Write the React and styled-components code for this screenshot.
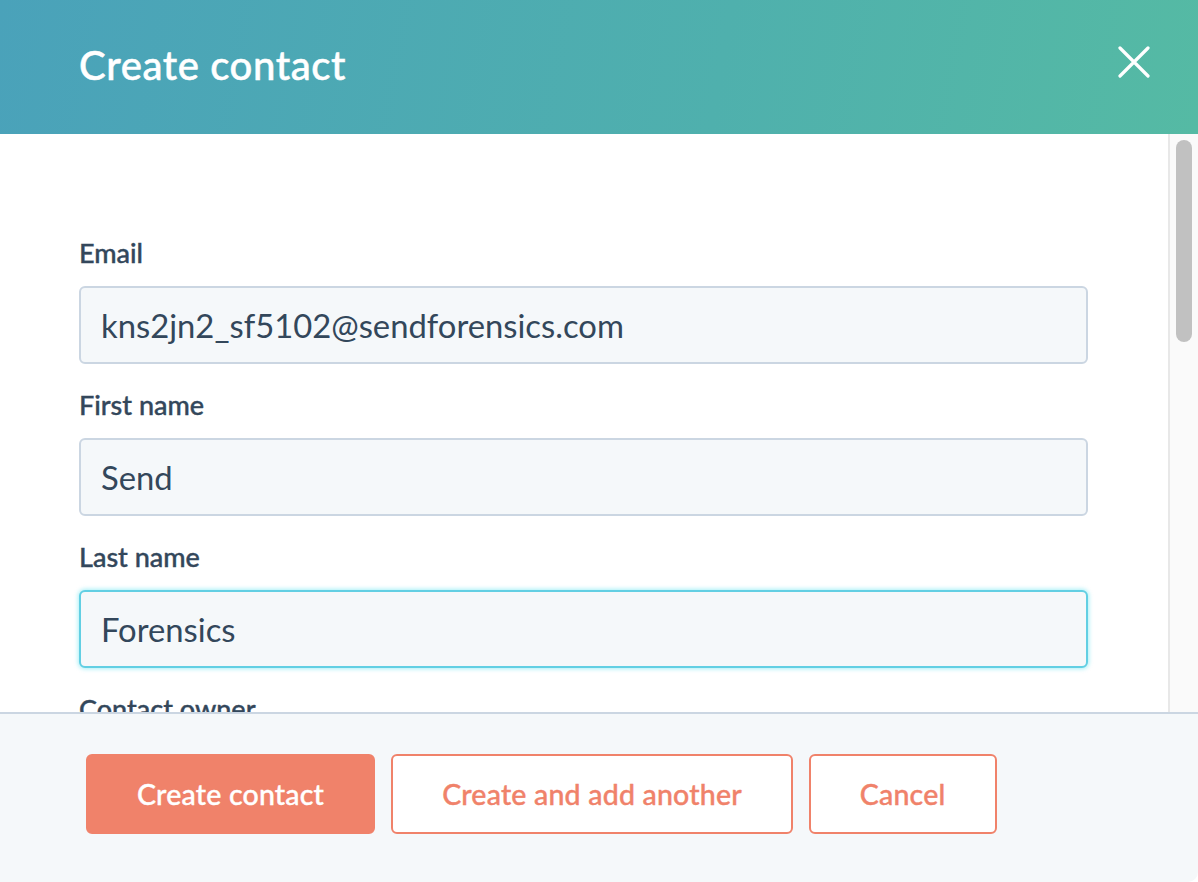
import React from "react";
import styled, { createGlobalStyle } from "styled-components";

const GlobalStyle = createGlobalStyle`
  html, body {
    margin: 0;
    padding: 0;
    background: #ffffff;
  }
  * {
    box-sizing: border-box;
  }
`;

const fields = [
  { label: "Email", value: "kns2jn2_sf5102@sendforensics.com" },
  { label: "First name", value: "Send" },
  { label: "Last name", value: "Forensics", focused: true },
];

const App = () => {
  return (
    <>
      <GlobalStyle />
      <Modal>
        <Header>
          <Title>Create contact</Title>
          <CloseButton aria-label="Close">
            <svg width="32" height="32" viewBox="0 0 32 32">
              <path
                d="M2 2 L30 30 M30 2 L2 30"
                stroke="#ffffff"
                strokeWidth="3.2"
                strokeLinecap="round"
              />
            </svg>
          </CloseButton>
        </Header>
        <Body>
          <Content>
            {fields.map((field) => (
              <Field key={field.label}>
                <Label>{field.label}</Label>
                <Input defaultValue={field.value} $focused={field.focused} />
              </Field>
            ))}
            <Field>
              <Label>Contact owner</Label>
            </Field>
          </Content>
          <ScrollTrack>
            <ScrollThumb />
          </ScrollTrack>
        </Body>
        <Footer>
          <Button $primary>Create contact</Button>
          <Button>Create and add another</Button>
          <Button>Cancel</Button>
        </Footer>
      </Modal>
    </>
  );
};

const Modal = styled.div`
  width: 1198px;
  height: 882px;
  display: flex;
  flex-direction: column;
  overflow: hidden;
  border-bottom-right-radius: 10px;
  font-family: Lato, "Noto Sans", sans-serif;
  color: #33475b;
`;

const Header = styled.div`
  height: 134px;
  flex-shrink: 0;
  display: flex;
  align-items: center;
  justify-content: space-between;
  padding: 0 48px 4px 79px;
  background: linear-gradient(100deg, #4aa2ba 0%, #4fb0ad 60%, #55baa4 100%);
`;

const Title = styled.h1`
  margin: 0;
  font-size: 40px;
  font-weight: 500;
  color: #ffffff;
  letter-spacing: 0.6px;
  -webkit-text-stroke: 0.5px #ffffff;
`;

const CloseButton = styled.button`
  border: none;
  background: transparent;
  padding: 0;
  width: 32px;
  height: 32px;
  display: flex;
  margin-bottom: 6px;
  cursor: pointer;
`;

const Body = styled.div`
  flex: 1;
  display: flex;
  min-height: 0;
  background: #ffffff;
`;

const Content = styled.div`
  flex: 1;
  overflow: hidden;
  padding: 101px 0 0 79px;
  display: flex;
  flex-direction: column;
  gap: 23px;
`;

const Field = styled.div`
  display: flex;
  flex-direction: column;
  gap: 15px;
`;

const Label = styled.label`
  height: 36px;
  line-height: 36px;
  font-size: 27px;
  font-weight: 500;
  color: #33475b;
  -webkit-text-stroke: 0.4px #33475b;
`;

const Input = styled.input`
  width: 1009px;
  height: 78px;
  padding: 0 20px;
  border-radius: 6px;
  background: #f5f8fa;
  font-family: Lato, "Noto Sans", sans-serif;
  font-size: 32.8px;
  color: #33475b;
  outline: none;
  border: 2px solid ${(p) => (p.$focused ? "#62cfe3" : "#cbd6e2")};
  box-shadow: ${(p) =>
    p.$focused ? "0 0 4px 1px rgba(0, 208, 228, 0.35)" : "none"};
`;

const ScrollTrack = styled.div`
  width: 30px;
  flex-shrink: 0;
  background: #fafafa;
  border-left: 2px solid #e8e8e8;
  padding: 6px 0 0 6px;
`;

const ScrollThumb = styled.div`
  width: 16px;
  height: 202px;
  border-radius: 8px;
  background: #c1c1c1;
`;

const Footer = styled.div`
  height: 170px;
  flex-shrink: 0;
  display: flex;
  align-items: center;
  gap: 16px;
  padding: 0 0 8px 86px;
  background: #f5f8fa;
  border-top: 2px solid #cbd6e2;
`;

const Button = styled.button`
  height: 80px;
  padding: 0 49px;
  border-radius: 6px;
  font-family: Lato, "Noto Sans", sans-serif;
  font-size: 28.5px;
  font-weight: 500;
  letter-spacing: 0.2px;
  cursor: pointer;
  border: 2px solid #f0826a;
  background: ${(p) => (p.$primary ? "#f0826a" : "#ffffff")};
  color: ${(p) => (p.$primary ? "#ffffff" : "#f0826a")};
  -webkit-text-stroke: 0.4px ${(p) => (p.$primary ? "#ffffff" : "#f0826a")};
`;

export default App;
